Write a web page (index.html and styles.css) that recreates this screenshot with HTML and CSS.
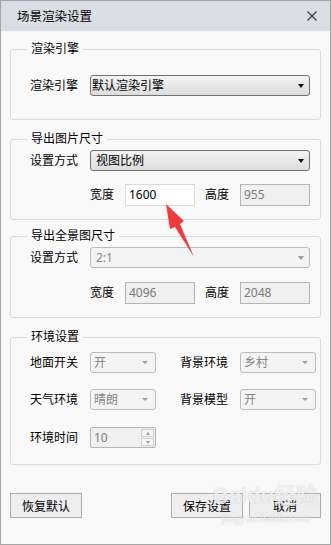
FILE: index.html
```html
<!DOCTYPE html>
<html lang="zh-CN">
<head>
<meta charset="UTF-8">
<meta name="viewport" content="width=device-width, initial-scale=1.0">
<title>场景渲染设置</title>
<link rel="stylesheet" href="styles.css">
</head>
<body>

<div class="window">
    <div class="titlebar">
        <span class="title">场景渲染设置</span>
        <svg class="close" width="10" height="10" viewBox="0 0 10 10">
            <path d="M0.5 0.5 L9.5 9.5 M9.5 0.5 L0.5 9.5" stroke="#333" stroke-width="1.1" fill="none"/>
        </svg>
    </div>

    <div class="content">
        <fieldset class="group g1">
            <legend>渲染引擎</legend>
            <div class="row">
                <span class="lbl">渲染引擎</span>
                <div class="combo tight">默认渲染引擎<span class="caret"></span></div>
            </div>
        </fieldset>

        <fieldset class="group g2">
            <legend>导出图片尺寸</legend>
            <div class="row">
                <span class="lbl">设置方式</span>
                <div class="combo">视图比例<span class="caret"></span></div>
            </div>
            <div class="row size-row">
                <span class="lbl-sm">宽度</span>
                <div class="field">1600</div>
                <span class="lbl-sm gap">高度</span>
                <div class="field disabled">955</div>
            </div>
        </fieldset>

        <fieldset class="group g3">
            <legend>导出全景图尺寸</legend>
            <div class="row">
                <span class="lbl">设置方式</span>
                <div class="combo disabled">2:1<span class="caret"></span></div>
            </div>
            <div class="row size-row">
                <span class="lbl-sm">宽度</span>
                <div class="field disabled">4096</div>
                <span class="lbl-sm gap">高度</span>
                <div class="field disabled">2048</div>
            </div>
        </fieldset>

        <fieldset class="group g4">
            <legend>环境设置</legend>
            <div class="env-row">
                <span class="lbl">地面开关</span>
                <div class="combo disabled small">开<span class="caret"></span></div>
                <span></span>
                <span class="lbl">背景环境</span>
                <div class="combo disabled small">乡村<span class="caret"></span></div>
            </div>
            <div class="env-row">
                <span class="lbl">天气环境</span>
                <div class="combo disabled small">晴朗<span class="caret"></span></div>
                <span></span>
                <span class="lbl">背景模型</span>
                <div class="combo disabled small">开<span class="caret"></span></div>
            </div>
            <div class="env-row last">
                <span class="lbl">环境时间</span>
                <div class="spin">
                    <span>10</span>
                    <span class="spin-btns"><span class="up"></span><span class="down"></span></span>
                </div>
            </div>
        </fieldset>

        <div class="buttons">
            <button class="btn">恢复默认</button>
            <button class="btn push">保存设置</button>
            <button class="btn">取消</button>
        </div>
    </div>

    <svg class="pointer" width="331" height="545" viewBox="0 0 331 545">
        <polygon points="166,204 184,221 180,224 194,257 175,227 170,229" fill="#f03a3c"/>
    </svg>

    <div class="watermark">
        <span class="wm-big">Baidu经验</span>
        <span class="wm-small">jingyan.baidu.com</span>
    </div>
</div>

</body>
</html>
```

FILE: styles.css
```css
body {
    margin: 0;
    font-family: "Noto Sans", "Noto Sans CJK SC", sans-serif;
    font-size: 12px;
    color: #000;
}
.window {
    position: relative;
    width: 331px;
    height: 545px;
    box-sizing: border-box;
    border: 1px solid #a5a5a5;
    background: #f9f9f9;
    overflow: hidden;
}
.titlebar {
    height: 30px;
    background: #dadee4;
    display: flex;
    align-items: center;
    justify-content: space-between;
    padding: 0 13px 0 16px;
}
.title {
    font-size: 12.5px;
    line-height: 14px;
    padding-top: 1px;
}
.close {
    display: block;
}
.content {
    padding: 11px 9px 0;
    display: flex;
    flex-direction: column;
}
.group {
    margin: 0;
    padding: 0;
    min-width: 0;
    border: 1px solid #d3dce4;
    border-radius: 3px;
}
.group legend {
    padding: 0 4px;
    margin-left: 16px;
    line-height: 14px;
    font-size: 12px;
}
.g1 { padding: 19px 0 23px; }
.g2 { margin-top: 12px; padding: 4px 0 13px; }
.g3 { margin-top: 9px; padding: 4px 0 13px; }
.g4 { margin-top: 12px; padding: 8px 0 16px; }
.row {
    display: flex;
    align-items: center;
    padding: 0 10px 0 19px;
}
.g2 .size-row { margin-top: 13px; }
.g3 .size-row { margin-top: 14px; }
.size-row {
    padding-left: 79px;
}
.lbl {
    width: 60px;
    flex: none;
    line-height: 14px;
}
.lbl-sm {
    width: 35px;
    flex: none;
    line-height: 14px;
}
.lbl-sm.gap {
    margin-left: 10px;
}
.combo {
    flex: 1;
    box-sizing: border-box;
    height: 21px;
    display: flex;
    align-items: center;
    padding-left: 5px;
    border: 1px solid #717171;
    border-radius: 3px;
    background: linear-gradient(#f3f3f3, #dddddd);
    line-height: 14px;
}
.combo.tight {
    padding-left: 1px;
}
.caret {
    margin-left: auto;
    margin-right: 5px;
    width: 0;
    height: 0;
    border-left: 3.5px solid transparent;
    border-right: 3.5px solid transparent;
    border-top: 4px solid #111;
}
.combo.disabled {
    border-color: #bcbcbc;
    background: #f4f4f4;
    color: #858585;
}
.combo.disabled .caret {
    border-top-color: #9a9a9a;
}
.combo.small {
    padding-left: 3px;
}
.combo.small .caret {
    margin-right: 7px;
    border-left-width: 3px;
    border-right-width: 3px;
    border-top-width: 3px;
}
.field {
    width: 70px;
    height: 22px;
    flex: none;
    box-sizing: border-box;
    display: flex;
    align-items: center;
    padding-left: 3px;
    border: 1px solid #dadada;
    background: #fff;
    line-height: 14px;
}
.field.disabled {
    border-color: #b5b5b5;
    background: #f0f0f0;
    color: #7a7a7a;
}
.env-row {
    display: grid;
    grid-template-columns: 60px 66px 24px 60px 76px;
    align-items: center;
    padding-left: 19px;
}
.env-row + .env-row { margin-top: 16px; }
.env-row.last { margin-top: 17px; }
.spin {
    box-sizing: border-box;
    height: 21px;
    display: flex;
    align-items: center;
    padding-left: 3px;
    border: 1px solid #b5b5b5;
    border-radius: 2px;
    background: #f0f0f0;
    color: #7a7a7a;
    line-height: 14px;
}
.spin-btns {
    margin-left: auto;
    margin-right: 1px;
    width: 13px;
    height: 17px;
    display: flex;
    flex-direction: column;
    gap: 1px;
}
.spin-btns span {
    flex: 1;
    display: flex;
    align-items: center;
    justify-content: center;
    border: 1px solid #cfcfcf;
    background: #f6f6f6;
}
.spin-btns .up::before,
.spin-btns .down::before {
    content: "";
    width: 0;
    height: 0;
    border-left: 2.5px solid transparent;
    border-right: 2.5px solid transparent;
}
.spin-btns .up::before { border-bottom: 3px solid #9a9a9a; }
.spin-btns .down::before { border-top: 3px solid #9a9a9a; }
.buttons {
    display: flex;
    gap: 6px;
    margin-top: 28px;
}
.btn {
    width: 72px;
    height: 25px;
    padding: 0;
    box-sizing: border-box;
    border: 1px solid #adadad;
    background: #eeeeee;
    font-family: inherit;
    font-size: 12px;
    color: #000;
}
.btn.push {
    margin-left: auto;
}
.pointer {
    position: absolute;
    left: -1px;
    top: -1px;
    pointer-events: none;
}
.watermark {
    position: absolute;
    left: 212px;
    top: 480px;
    display: flex;
    flex-direction: column;
    align-items: center;
    pointer-events: none;
    color: rgba(255, 255, 255, 0.75);
    text-shadow: 0 0 1px rgba(150, 150, 150, 0.55);
}
.wm-big {
    font-family: "Liberation Sans", "Noto Sans CJK SC", sans-serif;
    font-weight: bold;
    font-size: 22px;
    line-height: 30px;
}
.wm-small {
    font-family: "Liberation Serif", serif;
    font-size: 12px;
    line-height: 14px;
}
```
